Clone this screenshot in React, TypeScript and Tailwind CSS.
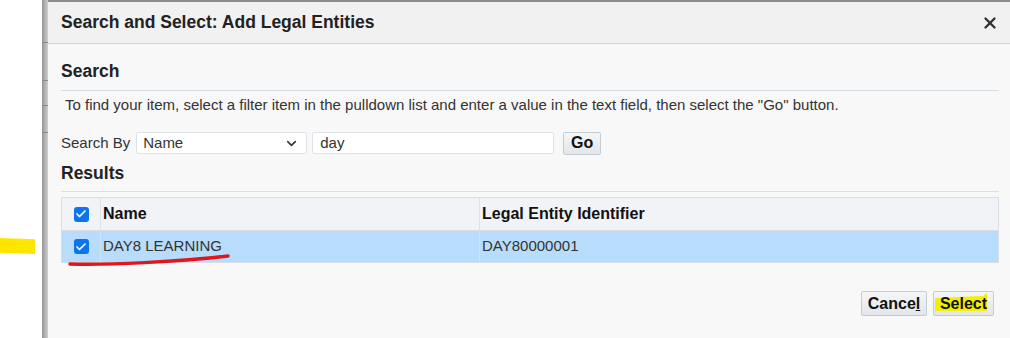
import React from "react";
import { X, ChevronDown, Check } from "lucide-react";

const Box: React.FC = () => (
  <span className="flex h-[15px] w-[15px] items-center justify-center rounded-[3px] bg-[#0b74ef]">
    <Check size={12} strokeWidth={3.5} className="text-white" />
  </span>
);

export default function App() {
  return (
    <div className="flex h-[338px] w-[1010px] overflow-hidden bg-white font-['Liberation_Sans',Arial,sans-serif] text-[#333]">
      {/* page behind the dialog */}
      <div className="w-[42px] shrink-0 pt-[238px]">
        <div className="h-[16px] w-[35px] bg-[#ffe500] [clip-path:polygon(0_0,100%_8%,100%_100%,0_92%)]" />
      </div>
      <div className="flex w-[6px] shrink-0 flex-col bg-gradient-to-r from-[#989898] via-[#b0b0b0] to-[#d0d0d0]">
        <div className="mt-[42px] h-px bg-[#8a8a8a]" />
        <div className="mt-[37px] h-px bg-[#8a8a8a]" />
        <div className="mt-[24px] h-px bg-[#8a8a8a]" />
        <div className="mt-[26px] h-px bg-[#8a8a8a]" />
      </div>

      {/* dialog */}
      <div className="flex flex-1 flex-col border-t-2 border-[#8c8c8c] bg-[#f8f8f8]">
        <div className="flex h-[42px] shrink-0 items-center justify-between border-b border-[#c9d2db] bg-[#f1f1f1] pl-[13px] pr-[11px]">
          <h1 className="text-[17.5px] font-bold text-[#222]">Search and Select: Add Legal Entities</h1>
          <X size={18} strokeWidth={3.2} className="text-[#333]" />
        </div>

        <div className="relative flex flex-1 flex-col pl-[13px] pr-[11px]">
          <h2 className="mt-[17px] text-[17.5px] font-bold leading-[20px] text-[#222]">Search</h2>
          <div className="mt-[9px] border-t border-[#d5dfe8]" />
          <p className="mt-[4px] pl-[4px] text-[15px] leading-[20px]">
            To find your item, select a filter item in the pulldown list and enter a value in the text field, then select the "Go" button.
          </p>

          <div className="mt-[16px] flex h-[24px] items-center">
            <span className="text-[15px]">Search By</span>
            <div className="ml-[6px] flex h-[22px] w-[171px] items-center justify-between rounded-[2px] border border-[#dfe3e8] bg-white pl-[6px] pr-[7px] text-[15px]">
              <span>Name</span>
              <ChevronDown size={15} strokeWidth={2.5} className="text-[#333]" />
            </div>
            <div className="ml-[5px] flex h-[22px] w-[242px] items-center rounded-[2px] border border-[#dfe3e8] bg-white pl-[7px] text-[15px]">
              day
            </div>
            <button className="ml-[9px] flex h-[23px] w-[38px] items-center justify-center rounded-[2px] border border-[#c4ccd4] bg-gradient-to-b from-[#f5f6f7] to-[#e2e6ea] text-[16px] font-bold text-[#111]">
              Go
            </button>
          </div>

          <h2 className="mt-[8px] text-[17.5px] font-bold leading-[20px] text-[#222]">Results</h2>
          <div className="mt-[8px] border-t border-[#d5dfe8]" />

          <div className="relative mt-[5px] border border-[#d6dfe7]">
            <div className="flex h-[33px] items-center border-b border-[#d6dfe7] bg-[#f2f3f7]">
              <div className="flex h-full w-[39px] items-center justify-center border-r border-[#dde3ea]">
                <Box />
              </div>
              <div className="flex h-full w-[379px] items-center border-r border-[#dde3ea] pl-[2px] text-[16px] font-bold text-[#111]">
                Name
              </div>
              <div className="pl-[2px] text-[16px] font-bold text-[#111]">Legal Entity Identifier</div>
            </div>
            <div className="flex h-[31px] items-center bg-[#b8dcfb]">
              <div className="flex h-full w-[39px] items-center justify-center border-r border-[#cde3f6]">
                <Box />
              </div>
              <div className="flex h-full w-[379px] items-center border-r border-[#cde3f6] pl-[2px] text-[15px] text-[#333]">
                DAY8 LEARNING
              </div>
              <div className="pl-[2px] text-[15px] text-[#333]">DAY80000001</div>
            </div>
            {/* red annotation underline */}
            <svg className="pointer-events-none absolute left-[6px] top-[55px]" width="164" height="14" viewBox="0 0 164 14">
              <path d="M2 11 C 40 12, 110 9, 160 3" stroke="#e0161c" strokeWidth="3.5" strokeLinecap="round" fill="none" />
            </svg>
          </div>

          <div className="mt-[28px] flex justify-end gap-[6px] pr-[5px]">
            <button className="flex h-[25px] w-[66px] items-center justify-center rounded-[2px] border border-[#c4ccd4] bg-gradient-to-b from-[#f5f6f7] to-[#e2e6ea] text-[16px] font-bold text-[#111]">
              <span>
                Cance<span className="underline">l</span>
              </span>
            </button>
            <button className="relative flex h-[25px] w-[61px] items-center justify-center rounded-[2px] border border-[#c4ccd4] bg-gradient-to-b from-[#f5f6f7] to-[#e2e6ea] text-[16px] font-bold text-[#111]">
              <svg className="absolute left-[1px] top-[1px]" width="52" height="20" viewBox="0 0 52 20">
                <polygon points="0,5 48,3 52,0 52,18 0,18" fill="#f2f000" />
              </svg>
              <span className="relative">Select</span>
            </button>
          </div>
        </div>
      </div>
    </div>
  );
}
